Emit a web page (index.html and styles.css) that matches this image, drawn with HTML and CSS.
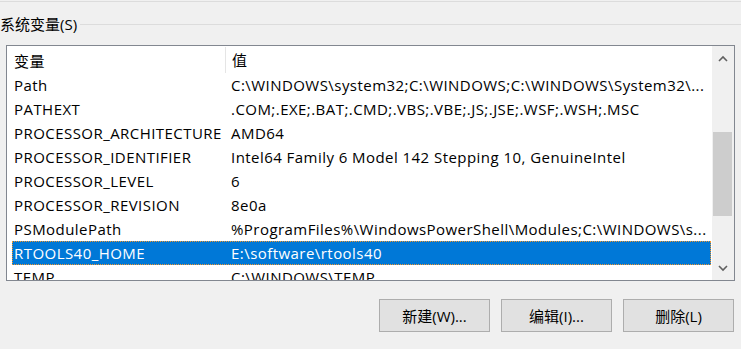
FILE: index.html
```html
<!DOCTYPE html>
<html lang="zh-CN">
<head>
<meta charset="UTF-8">
<title>系统变量</title>
<link rel="stylesheet" href="styles.css">
</head>
<body>

<div class="top-line"></div>

<div class="group-title">
  <span>系统变量(S)</span>
  <div class="rule"></div>
</div>

<div class="listbox">
  <div class="list">
    <div class="head">
      <div class="col-name">变量</div>
      <div class="col-value">值</div>
    </div>
    <div class="row"><div class="col-name">Path</div><div class="col-value">C:\WINDOWS\system32;C:\WINDOWS;C:\WINDOWS\System32\...</div></div>
    <div class="row"><div class="col-name">PATHEXT</div><div class="col-value">.COM;.EXE;.BAT;.CMD;.VBS;.VBE;.JS;.JSE;.WSF;.WSH;.MSC</div></div>
    <div class="row"><div class="col-name">PROCESSOR_ARCHITECTURE</div><div class="col-value">AMD64</div></div>
    <div class="row"><div class="col-name">PROCESSOR_IDENTIFIER</div><div class="col-value">Intel64 Family 6 Model 142 Stepping 10, GenuineIntel</div></div>
    <div class="row"><div class="col-name">PROCESSOR_LEVEL</div><div class="col-value">6</div></div>
    <div class="row"><div class="col-name">PROCESSOR_REVISION</div><div class="col-value">8e0a</div></div>
    <div class="row"><div class="col-name">PSModulePath</div><div class="col-value">%ProgramFiles%\WindowsPowerShell\Modules;C:\WINDOWS\s...</div></div>
    <div class="row selected"><div class="col-name">RTOOLS40_HOME</div><div class="col-value">E:\software\rtools40</div></div>
    <div class="row"><div class="col-name">TEMP</div><div class="col-value">C:\WINDOWS\TEMP</div></div>
  </div>
  <div class="scrollbar">
    <div class="arrow">
      <svg width="10" height="7" viewBox="0 0 10 7"><polyline points="1,6 5,2 9,6" fill="none" stroke="#606060" stroke-width="1.6"/></svg>
    </div>
    <div class="track"><div class="thumb"></div></div>
    <div class="arrow">
      <svg width="10" height="7" viewBox="0 0 10 7"><polyline points="1,1 5,5 9,1" fill="none" stroke="#606060" stroke-width="1.6"/></svg>
    </div>
  </div>
</div>

<div class="buttons">
  <button class="btn">新建(W)...</button>
  <button class="btn">编辑(I)...</button>
  <button class="btn">删除(L)</button>
</div>

</body>
</html>
```

FILE: styles.css
```css
body {margin:0; background:#f0f0f0; color:#000; font-family:'Open Sans', 'Noto Sans CJK SC', sans-serif; font-size:15px; width:741px; height:349px; overflow:hidden;}
.top-line {height:1px; margin-top:1px; background:#dcdcdc;}
.group-title {display:flex; align-items:center; height:20px; margin-top:12px; margin-bottom:11px;}
.group-title span {white-space:nowrap; line-height:20px;}
.group-title .rule {flex:1; height:1px; background:#dcdcdc; margin-left:3px;}
.listbox {display:flex; margin-left:6px; width:727px; height:234px; border:1px solid #828790; background:#fff;}
.list {flex:1; overflow:hidden; letter-spacing:0.45px;}
.head {display:flex; height:27px; align-items:center;}
.head .col-name {width:211px; padding-left:7px; height:26px; line-height:28px; border-right:1px solid #e5e5e5;}
.head .col-value {padding-left:6px; line-height:28px;}
.row {display:flex; height:24px; margin-left:5px; width:699px; line-height:25px; white-space:nowrap; box-sizing:border-box;}
.row .col-name {width:211px; padding-left:2px;}
.row .col-value {padding-left:6px; overflow:hidden;}
.row.selected {background:#0078d7; color:#fff; outline:1px dotted #f0962e; outline-offset:-1px;}
.scrollbar {width:22px; background:#f0f0f0; display:flex; flex-direction:column;}
.arrow {height:24px; display:flex; align-items:center; justify-content:center;}
.track {flex:1; padding-top:62px;}
.thumb {margin-left:1px; width:19px; height:84px; background:#cdcdcd;}
.buttons {display:flex; justify-content:flex-end; gap:11px; padding-right:7px; margin-top:18px;}
.btn {width:111px; height:33px; background:#e1e1e1; border:1px solid #adadad; font-family:inherit; font-size:15px; color:#000; padding:0;}
```
